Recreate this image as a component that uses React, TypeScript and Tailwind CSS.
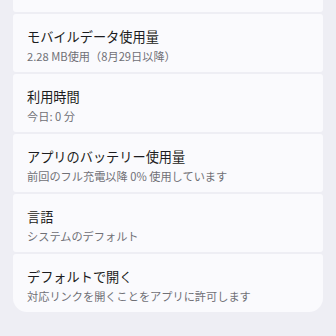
const items = [
  { title: 'モバイルデータ使用量', sub: '2.28 MB使用（8月29日以降）' },
  { title: '利用時間', sub: '今日: 0 分' },
  { title: 'アプリのバッテリー使用量', sub: '前回のフル充電以降 0% 使用しています' },
  { title: '言語', sub: 'システムのデフォルト' },
  { title: 'デフォルトで開く', sub: '対応リンクを開くことをアプリに許可します' },
];

export default function App() {
  return (
    <div
      className="w-[336px] h-[336px] overflow-hidden bg-[#eeeef4]"
      style={{ fontFamily: '"Noto Sans CJK JP", "Noto Sans", sans-serif' }}
    >
      <div className="mx-[13px] flex flex-col gap-[2px]">
        <div className="h-[12px] bg-[#fafafd] rounded-b-[3px]" />
        {items.map((it, i) => (
          <div
            key={it.title}
            className={
              'h-[58px] bg-[#fafafd] px-[14px] pt-[13px] ' +
              (i === items.length - 1 ? 'rounded-t-[3px] rounded-b-[14px]' : 'rounded-[3px]')
            }
          >
            <div className="text-[13.2px] leading-[19px] text-[#1c1c20]">{it.title}</div>
            <div className="mt-[2px] text-[11.2px] leading-[16px] text-[#707076]">{it.sub}</div>
          </div>
        ))}
      </div>
    </div>
  );
}
